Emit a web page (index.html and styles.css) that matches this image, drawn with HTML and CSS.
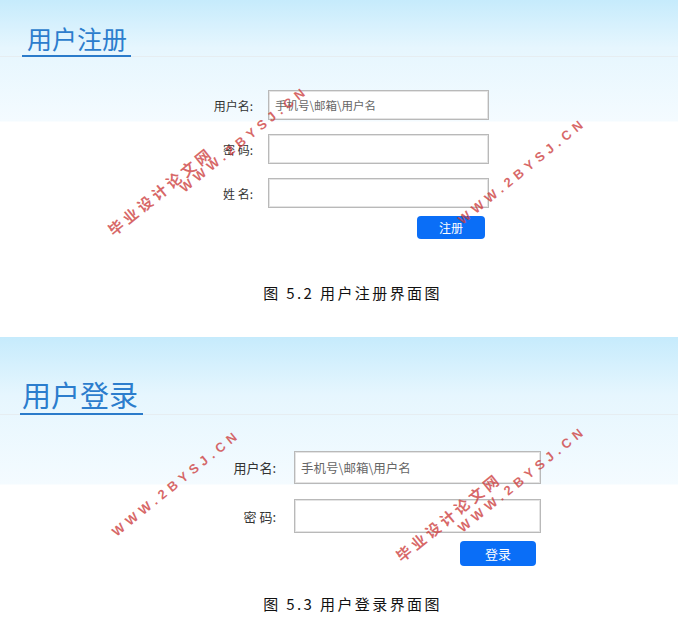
FILE: index.html
```html
<!DOCTYPE html>
<html lang="zh-CN">
<head>
<meta charset="utf-8">
<title>用户注册 / 用户登录</title>
<link rel="stylesheet" href="styles.css">
</head>
<body>
<div class="page">
  <section class="shot shot-reg">
    <div class="head">
      <h1 class="title">用户注册</h1>
    </div>
    <div class="form">
      <label class="lbl">用户名:</label>
      <input class="field" type="text" placeholder="手机号\邮箱\用户名">
      <label class="lbl">密 码:</label>
      <input class="field" type="password">
      <label class="lbl">姓 名:</label>
      <input class="field" type="text">
      <div class="btn-row"><button class="btn">注册</button></div>
    </div>
  </section>
  <p class="caption cap-reg">图 5.2 用户注册界面图</p>

  <section class="shot shot-login">
    <div class="head">
      <h1 class="title">用户登录</h1>
    </div>
    <div class="form">
      <label class="lbl">用户名:</label>
      <input class="field" type="text" placeholder="手机号\邮箱\用户名">
      <label class="lbl">密 码:</label>
      <input class="field" type="password">
      <div class="btn-row"><button class="btn">登录</button></div>
    </div>
  </section>
  <p class="caption cap-login">图 5.3 用户登录界面图</p>

  <span class="wm wm-cn wm1">毕业设计论文网</span>
  <span class="wm wm-en wm2">WWW.2BYSJ.CN</span>
  <span class="wm wm-en wm3">WWW.2BYSJ.CN</span>
  <span class="wm wm-en wm4">WWW.2BYSJ.CN</span>
  <span class="wm wm-cn wm5">毕业设计论文网</span>
  <span class="wm wm-en wm6">WWW.2BYSJ.CN</span>
</div>
</body>
</html>
```
FILE: styles.css
```css
html, body {
  margin: 0;
  padding: 0;
  background: #fff;
}
.page {
  position: relative;
  width: 678px;
  height: 622px;
  overflow: hidden;
  font-family: "Noto Sans CJK SC", "Noto Sans", sans-serif;
  color: #333;
}
.shot {
  width: 678px;
}
.shot-reg {
  background: linear-gradient(180deg, #c6ebfc 0px, #e6f6fe 48px, #f4fbff 121px, #ffffff 122px);
}
.shot-login {
  margin-top: 34px;
  background: linear-gradient(180deg, #c6ebfc 0px, #e6f6fe 58px, #f4fbff 147px, #ffffff 148px);
}
.head {
  border-bottom: 1px solid #e6edf1;
  display: flex;
}
.title {
  margin: 0 0 -1px 0;
  font-weight: 400;
  color: #2c7dcd;
  border-bottom: 2px solid #2b7bca;
}
.shot-reg .head { padding: 23px 0 0 22px; }
.shot-reg .title {
  font-size: 25px;
  line-height: 30px;
  padding: 0 4px 2px 5px;
}
.shot-login .head { padding: 40px 0 0 20px; }
.shot-login .title {
  font-size: 29px;
  line-height: 34px;
  padding: 0 5px 2px 2px;
}
.form {
  display: grid;
  align-items: center;
}
.shot-reg .form {
  margin-top: 33px;
  grid-template-columns: 253px 221px;
  grid-template-rows: 30px 30px 30px auto;
  column-gap: 15px;
  row-gap: 14px;
}
.shot-login .form {
  margin-top: 36px;
  grid-template-columns: 276px 247px;
  grid-template-rows: 33px 34px auto;
  column-gap: 18px;
  row-gap: 15px;
}
.lbl {
  text-align: right;
  color: #333;
}
.shot-reg .lbl { font-size: 12px; }
.shot-login .lbl { font-size: 13px; }
.field {
  box-sizing: border-box;
  width: 100%;
  height: 100%;
  margin: 0;
  border: 1px solid #b9b9b9;
  box-shadow: inset 0 0 0 1px #e4e4e4;
  background: #fff;
  padding: 0 6px;
  font-family: "Noto Sans CJK SC", "Noto Sans", sans-serif;
  color: #555;
  outline: none;
}
.field::placeholder { color: #666; }
.shot-reg .field { font-size: 11.5px; }
.shot-login .field { font-size: 12.5px; }
.btn-row {
  grid-column: 2;
  align-self: start;
  display: flex;
  justify-content: flex-end;
}
.shot-reg .btn-row { margin-top: -6px; padding-right: 4px; }
.shot-login .btn-row { margin-top: -7px; padding-right: 5px; }
.btn {
  display: block;
  border: none;
  border-radius: 4px;
  background: #0a6ef7;
  color: #fff;
  font-family: "Noto Sans CJK SC", "Noto Sans", sans-serif;
  padding: 0;
  margin: 0;
}
.shot-reg .btn { width: 68px; height: 23px; font-size: 12px; }
.shot-login .btn { width: 76px; height: 25px; font-size: 13px; }
.caption {
  margin: 0;
  text-align: center;
  font-family: "Noto Sans CJK SC", sans-serif;
  font-size: 15px;
  line-height: 20px;
  color: #111;
  letter-spacing: 2.4px;
  padding-left: 27px;
}
.cap-reg { margin-top: 44px; }
.cap-login { margin-top: 28px; }

.wm {
  position: absolute;
  white-space: nowrap;
  transform-origin: 0 50%;
  transform: rotate(-39deg);
  color: rgba(205, 62, 62, 0.78);
  font-weight: 700;
  line-height: 16px;
  height: 16px;
}
.wm-cn {
  font-family: "Noto Sans CJK SC", sans-serif;
  font-size: 15px;
  letter-spacing: 3.6px;
}
.wm-en {
  font-family: "Liberation Sans", Arial, sans-serif;
  font-size: 13px;
  letter-spacing: 4.8px;
}
.wm1 { left: 110px; top: 224px; }
.wm2 { left: 182px; top: 182px; }
.wm3 { left: 460px; top: 214px; }
.wm4 { left: 114px; top: 526px; }
.wm5 { left: 398px; top: 550px; }
.wm6 { left: 460px; top: 522px; }
```
